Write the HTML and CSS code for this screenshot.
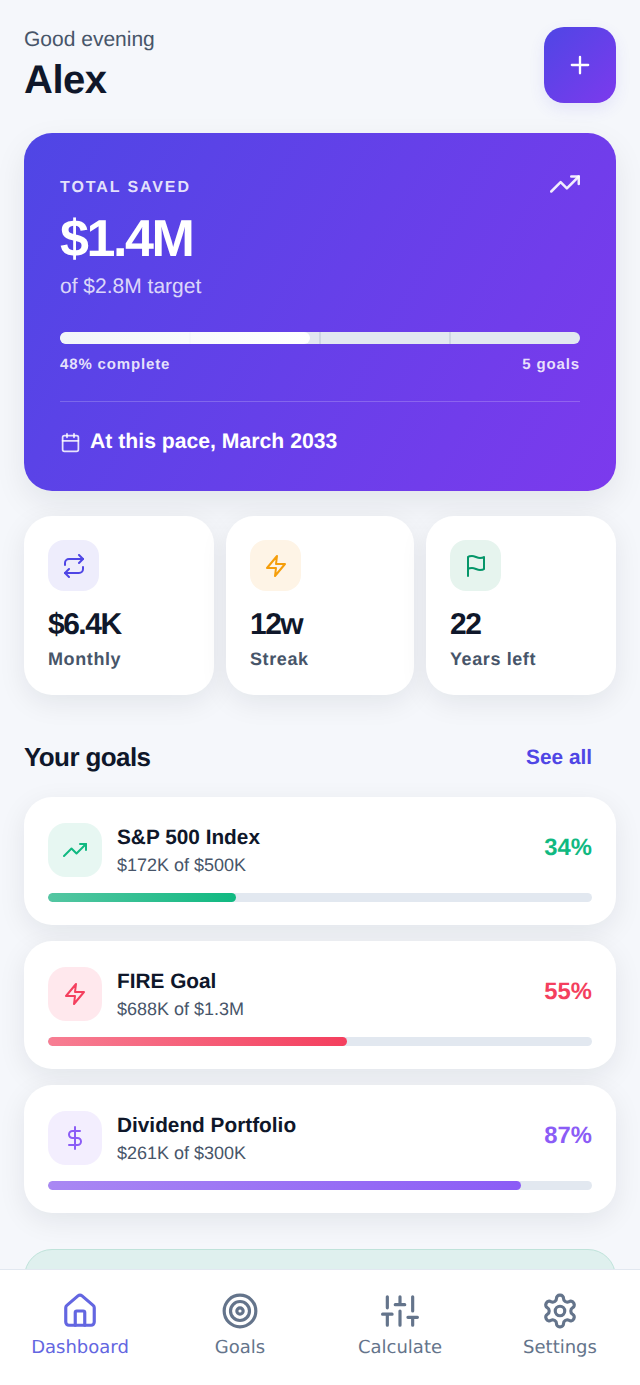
FILE: index.html
```html
<!DOCTYPE html>
<html>
  <head>
    <title>Dashboard</title>
    <link rel="stylesheet" href="styles.css">
  </head>
  <body>
    <div class="screen">
      <main class="content">
        <header class="top">
          <div>
            <div class="greeting">Good evening</div>
            <h1 class="name">Alex</h1>
          </div>
          <button class="add-btn">
            <svg class="icon" width="28" height="28" viewBox="0 0 24 24"><path d="M12 5v14M5 12h14"/></svg>
          </button>
        </header>

        <section class="hero">
          <div class="hero-top">
            <div class="hero-label">TOTAL SAVED</div>
            <svg class="icon" width="30" height="30" viewBox="0 0 24 24"><polyline points="23 6 13.5 15.5 8.5 10.5 1 18"/><polyline points="17 6 23 6 23 12"/></svg>
          </div>
          <div class="hero-amount">$1.4M</div>
          <div class="hero-target">of $2.8M target</div>
          <div class="hero-bar">
            <div class="hero-fill" style="width: 48%"></div>
            <i class="tick t25"></i><i class="tick t50"></i><i class="tick t75"></i>
          </div>
          <div class="hero-meta"><span>48% complete</span><span>5 goals</span></div>
          <div class="hero-forecast">
            <svg class="icon" width="21" height="21" viewBox="0 0 24 24"><rect x="3" y="4" width="18" height="18" rx="2"/><path d="M16 2v4M8 2v4M3 10h18"/></svg>
            <span>At this pace, March 2033</span>
          </div>
        </section>

        <section class="stats">
          <div class="stat">
            <div class="stat-icon indigo">
              <svg class="icon" width="24" height="24" viewBox="0 0 24 24"><polyline points="17 1 21 5 17 9"/><path d="M3 11V9a4 4 0 0 1 4-4h14"/><polyline points="7 23 3 19 7 15"/><path d="M21 13v2a4 4 0 0 1-4 4H3"/></svg>
            </div>
            <div class="stat-value">$6.4K</div>
            <div class="stat-label">Monthly</div>
          </div>
          <div class="stat">
            <div class="stat-icon amber">
              <svg class="icon" width="24" height="24" viewBox="0 0 24 24"><polygon points="13 2 3 14 12 14 11 22 21 10 12 10 13 2"/></svg>
            </div>
            <div class="stat-value">12w</div>
            <div class="stat-label">Streak</div>
          </div>
          <div class="stat">
            <div class="stat-icon green">
              <svg class="icon" width="24" height="24" viewBox="0 0 24 24"><path d="M4 15s1-1 4-1 5 2 8 2 4-1 4-1V3s-1 1-4 1-5-2-8-2-4 1-4 1z"/><line x1="4" y1="22" x2="4" y2="15"/></svg>
            </div>
            <div class="stat-value">22</div>
            <div class="stat-label">Years left</div>
          </div>
        </section>

        <div class="section-head">
          <h2>Your goals</h2>
          <a class="see-all">See all</a>
        </div>

        <section class="goals">
          <div class="goal emerald">
            <div class="goal-row">
              <div class="goal-icon">
                <svg class="icon" width="24" height="24" viewBox="0 0 24 24"><polyline points="23 6 13.5 15.5 8.5 10.5 1 18"/><polyline points="17 6 23 6 23 12"/></svg>
              </div>
              <div class="goal-text">
                <div class="goal-name">S&amp;P 500 Index</div>
                <div class="goal-sub">$172K of $500K</div>
              </div>
              <div class="goal-pct">34%</div>
            </div>
            <div class="goal-bar"><div class="goal-fill" style="width: 34.6%"></div></div>
          </div>
          <div class="goal rose">
            <div class="goal-row">
              <div class="goal-icon">
                <svg class="icon" width="24" height="24" viewBox="0 0 24 24"><polygon points="13 2 3 14 12 14 11 22 21 10 12 10 13 2"/></svg>
              </div>
              <div class="goal-text">
                <div class="goal-name">FIRE Goal</div>
                <div class="goal-sub">$688K of $1.3M</div>
              </div>
              <div class="goal-pct">55%</div>
            </div>
            <div class="goal-bar"><div class="goal-fill" style="width: 55%"></div></div>
          </div>
          <div class="goal violet">
            <div class="goal-row">
              <div class="goal-icon">
                <svg class="icon" width="24" height="24" viewBox="0 0 24 24"><line x1="12" y1="1" x2="12" y2="23"/><path d="M17 5H9.5a3.5 3.5 0 0 0 0 7h5a3.5 3.5 0 0 1 0 7H6"/></svg>
              </div>
              <div class="goal-text">
                <div class="goal-name">Dividend Portfolio</div>
                <div class="goal-sub">$261K of $300K</div>
              </div>
              <div class="goal-pct">87%</div>
            </div>
            <div class="goal-bar"><div class="goal-fill" style="width: 87%"></div></div>
          </div>
        </section>

        <div class="tip"></div>
      </main>

      <nav class="tabbar">
        <a class="tab active">
          <svg class="icon" width="38" height="38" viewBox="0 0 24 24"><path d="M15 21v-8a1 1 0 0 0-1-1h-4a1 1 0 0 0-1 1v8"/><path d="M3 10a2 2 0 0 1 .709-1.528l7-5.999a2 2 0 0 1 2.582 0l7 5.999A2 2 0 0 1 21 10v9a2 2 0 0 1-2 2H5a2 2 0 0 1-2-2z"/></svg>
          <span>Dashboard</span>
        </a>
        <a class="tab">
          <svg class="icon" width="38" height="38" viewBox="0 0 24 24"><circle cx="12" cy="12" r="10"/><circle cx="12" cy="12" r="6"/><circle cx="12" cy="12" r="2"/></svg>
          <span>Goals</span>
        </a>
        <a class="tab">
          <svg class="icon" width="38" height="38" viewBox="0 0 24 24"><path d="M4 21v-7M4 10V3M12 21v-9M12 8V3M20 21v-5M20 12V3M1 14h6M9 8h6M17 16h6"/></svg>
          <span>Calculate</span>
        </a>
        <a class="tab">
          <svg class="icon" width="38" height="38" viewBox="0 0 24 24"><path d="M12.22 2h-.44a2 2 0 0 0-2 2v.18a2 2 0 0 1-1 1.73l-.43.25a2 2 0 0 1-2 0l-.15-.08a2 2 0 0 0-2.73.73l-.22.38a2 2 0 0 0 .73 2.73l.15.1a2 2 0 0 1 1 1.72v.51a2 2 0 0 1-1 1.74l-.15.09a2 2 0 0 0-.73 2.73l.22.38a2 2 0 0 0 2.73.73l.15-.08a2 2 0 0 1 2 0l.43.25a2 2 0 0 1 1 1.73V20a2 2 0 0 0 2 2h.44a2 2 0 0 0 2-2v-.18a2 2 0 0 1 1-1.73l.43-.25a2 2 0 0 1 2 0l.15.08a2 2 0 0 0 2.73-.73l.22-.39a2 2 0 0 0-.73-2.73l-.15-.08a2 2 0 0 1-1-1.74v-.5a2 2 0 0 1 1-1.74l.15-.09a2 2 0 0 0 .73-2.73l-.22-.38a2 2 0 0 0-2.73-.73l-.15.08a2 2 0 0 1-2 0l-.43-.25a2 2 0 0 1-1-1.73V4a2 2 0 0 0-2-2z"/><circle cx="12" cy="12" r="3"/></svg>
          <span>Settings</span>
        </a>
      </nav>
    </div>
  </body>
</html>
```

FILE: styles.css
```css
* {
  box-sizing: border-box;
}
html, body {
  margin: 0;
  height: 100%;
}
body {
  font-family: "Liberation Sans", Arial, sans-serif;
  background-color: #f5f7fb;
  color: #0f172a;
  text-rendering: geometricPrecision;
}
.icon {
  fill: none;
  stroke: currentColor;
  stroke-width: 2;
  stroke-linecap: round;
  stroke-linejoin: round;
  display: block;
}
.screen {
  height: 100vh;
  display: flex;
  flex-direction: column;
  overflow: hidden;
}
.content {
  flex: 1;
  min-height: 0;
  overflow: hidden;
  padding: 27px 24px 0;
}

.top {
  display: flex;
  justify-content: space-between;
  align-items: flex-start;
}
.greeting {
  font-size: 21px;
  line-height: 24px;
  margin-top: 1px;
  color: #475569;
}
.name {
  font-size: 40px;
  line-height: 48px;
  letter-spacing: -0.5px;
  font-weight: 700;
  margin: 4px 0 0;
}
.add-btn {
  width: 72px;
  height: 76px;
  border: none;
  border-radius: 20px;
  color: #fff;
  background: linear-gradient(135deg, #4f46e5, #7c3aed);
  box-shadow: 0 6px 16px rgba(79, 70, 229, 0.1);
  display: flex;
  align-items: center;
  justify-content: center;
  padding: 0;
}

.hero {
  margin-top: 29px;
  height: 358px;
  padding: 36px;
  border-radius: 28px;
  color: #fff;
  background: linear-gradient(120deg, #4f46e5, #7c3aed);
  box-shadow: 0 12px 32px rgba(15, 23, 42, 0.08);
}
.hero-top {
  display: flex;
  justify-content: space-between;
  align-items: flex-start;
  height: 32px;
}
.hero-label {
  font-size: 16px;
  line-height: 34px;
  padding-top: 2px;
  font-weight: 600;
  letter-spacing: 1.9px;
  color: rgba(255, 255, 255, 0.85);
}
.hero-top .icon {
  color: rgba(255, 255, 255, 0.9);
}
.hero-amount {
  font-size: 52px;
  line-height: 60px;
  font-weight: 700;
  letter-spacing: -2.4px;
  margin-top: 8px;
}
.hero-target {
  font-size: 21px;
  line-height: 26px;
  color: rgba(255, 255, 255, 0.8);
  margin-top: 5px;
}
.hero-bar {
  position: relative;
  height: 12px;
  margin-top: 32px;
  border-radius: 6px;
  background-color: #e2e8f0;
  overflow: hidden;
}
.hero-fill {
  height: 100%;
  border-radius: 6px;
  background: linear-gradient(90deg, #f1f5f9, #fff);
}
.tick {
  position: absolute;
  top: 0;
  bottom: 0;
  width: 2px;
  margin-left: -1px;
  background-color: rgba(148, 163, 184, 0.25);
}
.hero-fill + .tick {
  background-color: rgba(226, 232, 240, 0.12);
}
.t25 { left: 25%; }
.t50 { left: 50%; }
.t75 { left: 75%; }
.hero-meta {
  display: flex;
  justify-content: space-between;
  font-size: 15px;
  line-height: 18px;
  font-weight: 600;
  letter-spacing: 0.85px;
  color: rgba(255, 255, 255, 0.85);
  margin-top: 12px;
}
.hero-forecast {
  display: flex;
  align-items: center;
  gap: 9px;
  margin-top: 27px;
  padding-top: 27px;
  border-top: 1px solid rgba(255, 255, 255, 0.2);
  font-size: 21.2px;
  line-height: 26px;
  font-weight: 700;
}
.hero-forecast .icon {
  color: rgba(255, 255, 255, 0.85);
}

.stats {
  display: grid;
  grid-template-columns: 190px 1fr 190px;
  gap: 12px;
  margin-top: 25px;
}
.stat {
  height: 179px;
  padding: 24px;
  background-color: #fff;
  border-radius: 28px;
  box-shadow: 0 8px 28px rgba(15, 23, 42, 0.08);
}
.stat-icon {
  width: 51px;
  height: 51px;
  border-radius: 16px;
  display: flex;
  align-items: center;
  justify-content: center;
}
.indigo { background-color: #eeedfc; color: #4f46e5; }
.amber { background-color: #fef4e6; color: #f59e0b; }
.green { background-color: #e6f4ee; color: #059669; }
.stat-value {
  font-size: 30px;
  line-height: 36px;
  font-weight: 700;
  letter-spacing: -1.5px;
  margin-top: 16px;
}
.stat-label {
  font-size: 18px;
  line-height: 22px;
  font-weight: 600;
  letter-spacing: 0.6px;
  color: #475569;
  margin-top: 5px;
}

.section-head {
  display: flex;
  justify-content: space-between;
  align-items: center;
  margin-top: 46px;
  padding-right: 24px;
}
.section-head h2 {
  font-size: 26px;
  line-height: 32px;
  letter-spacing: -0.6px;
  font-weight: 700;
  margin: 0;
}
.see-all {
  font-size: 20.8px;
  font-weight: 700;
  padding-top: 2px;
  color: #4f46e5;
}

.goals {
  display: flex;
  flex-direction: column;
  gap: 16px;
  margin-top: 24px;
}
.goal {
  height: 128px;
  padding: 26px 24px 0;
  background-color: #fff;
  border-radius: 28px;
  box-shadow: 0 8px 28px rgba(15, 23, 42, 0.08);
}
.goal-row {
  display: flex;
  align-items: center;
  gap: 15px;
}
.goal-icon {
  width: 54px;
  height: 54px;
  border-radius: 18px;
  display: flex;
  align-items: center;
  justify-content: center;
  flex-shrink: 0;
}
.goal-text {
  flex: 1;
  padding-top: 2px;
}
.goal-name {
  font-size: 20.8px;
  line-height: 26px;
  font-weight: 700;
}
.goal-sub {
  font-size: 18px;
  line-height: 24px;
  color: #475569;
  margin-top: 2px;
}
.goal-pct {
  font-size: 23.8px;
  font-weight: 700;
  margin-bottom: 4px;
}
.goal-bar {
  height: 9px;
  margin-top: 16px;
  border-radius: 5px;
  background-color: #e2e8f0;
  overflow: hidden;
}
.goal-fill {
  height: 100%;
  border-radius: 5px;
}
.emerald .goal-icon { background-color: #e7f7f2; color: #10b981; }
.emerald .goal-pct { color: #10b981; }
.emerald .goal-fill { background: linear-gradient(90deg, #54c6a2, #10b981); }
.rose .goal-icon { background-color: #ffe8ed; color: #f43f5e; }
.rose .goal-pct { color: #f43f5e; }
.rose .goal-fill { background: linear-gradient(90deg, #f77e93, #f43f5e); }
.violet .goal-icon { background-color: #f3eefe; color: #8b5cf6; }
.violet .goal-pct { color: #8b5cf6; }
.violet .goal-fill { background: linear-gradient(90deg, #a988f3, #8b5cf6); }

.tip {
  height: 120px;
  margin-top: 36px;
  border-radius: 28px;
  background-color: #dff0ee;
  border: 1px solid #bfe3da;
}

.tabbar {
  flex-shrink: 0;
  height: 116px;
  padding-top: 22px;
  display: grid;
  grid-template-columns: repeat(4, 1fr);
  background-color: #fff;
  border-top: 1px solid #e2e8f0;
}
.tab {
  display: flex;
  flex-direction: column;
  align-items: center;
  gap: 7px;
  font-family: "DejaVu Sans", sans-serif;
  font-size: 18px;
  line-height: 22px;
  color: #64748b;
}
.tab.active {
  color: #6366e1;
}
```
